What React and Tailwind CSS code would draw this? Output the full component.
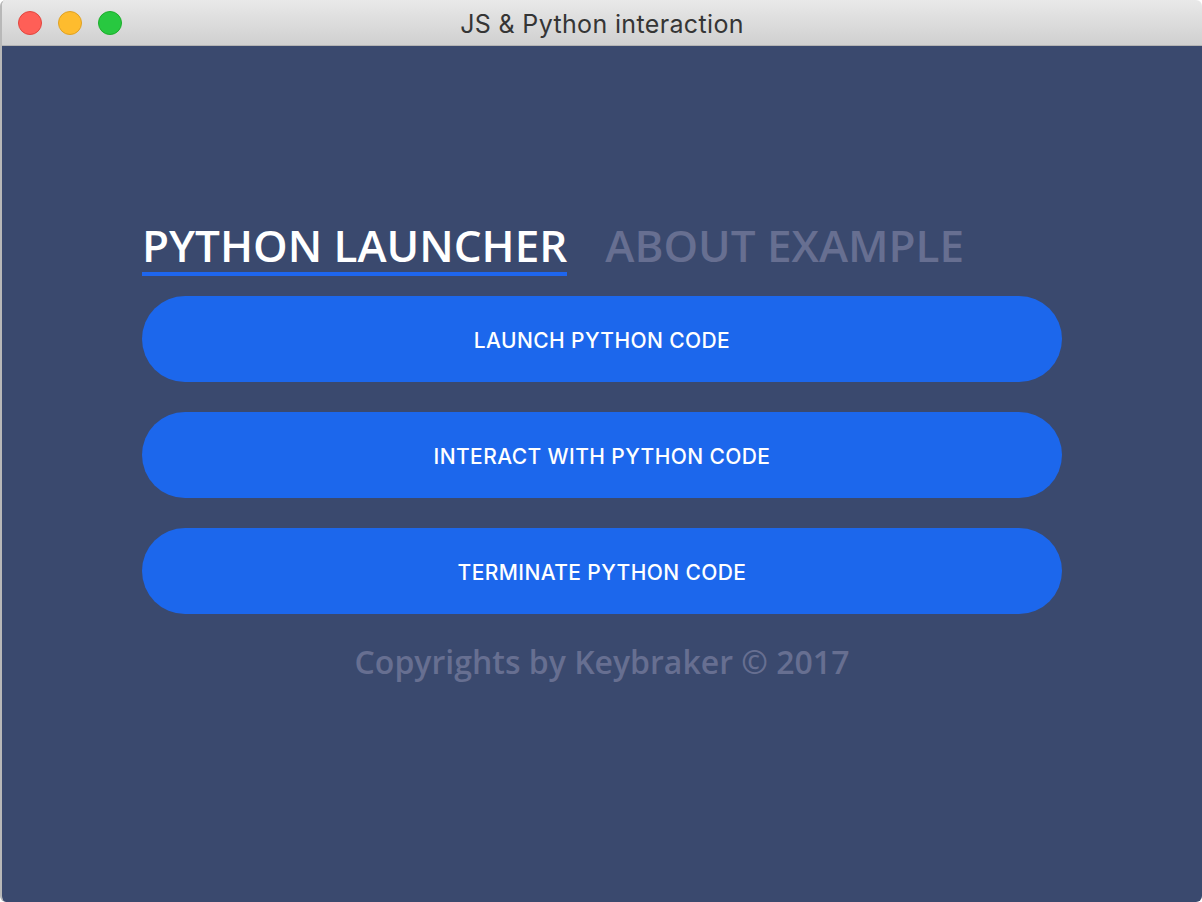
import React from 'react';

const buttons = [
    'LAUNCH PYTHON CODE',
    'INTERACT WITH PYTHON CODE',
    'TERMINATE PYTHON CODE',
];

export default function App() {
    return (
        <div className="w-[1202px] h-[902px] bg-white">
            <div className="w-full h-full flex flex-col rounded-[6px] overflow-hidden border-l-2 border-[#b8b8b8]">
                {/* Title bar */}
                <div className="relative h-[46px] shrink-0 flex items-center justify-center bg-gradient-to-b from-[#e9e9e9] to-[#d0d0d0] border-b border-[#b4b4b4]">
                    <div className="absolute left-[16px] top-[11px] flex gap-[16px]">
                        <span className="w-[24px] h-[24px] rounded-full bg-[#ff5f57] border border-[#e2463f]" />
                        <span className="w-[24px] h-[24px] rounded-full bg-[#febc2e] border border-[#dfa123]" />
                        <span className="w-[24px] h-[24px] rounded-full bg-[#28c840] border border-[#1dad2b]" />
                    </div>
                    <span className="text-[25px] tracking-[0.35px] leading-none text-[#353535] font-['Inter',sans-serif] mt-[4px]">JS &amp; Python interaction</span>
                </div>

                {/* Content */}
                <main className="flex-1 bg-[#3a496e]">
                    <div className="w-[920px] mx-auto pt-[177px]">
                        <div className="flex items-start gap-[38px] font-['Open_Sans',sans-serif] font-semibold text-[44px] leading-none">
                            <span className="text-white pb-[5px] border-b-4 border-[#1e66ee]">PYTHON LAUNCHER</span>
                            <span className="text-[#676f91]">ABOUT EXAMPLE</span>
                        </div>

                        <div className="mt-[20px] flex flex-col gap-[30px]">
                            {buttons.map((label) => (
                                <button
                                    key={label}
                                    className="h-[86px] w-full rounded-full bg-[#1c67ec] text-white font-['Inter',sans-serif] font-medium text-[21px] tracking-[0.4px] pt-[3px]"
                                >
                                    {label}
                                </button>
                            ))}
                        </div>

                        <p className="mt-[32px] text-center font-['Open_Sans',sans-serif] font-semibold text-[32px] leading-none text-[#676f91]">
                            Copyrights by Keybraker © 2017
                        </p>
                    </div>
                </main>
            </div>
        </div>
    );
}
